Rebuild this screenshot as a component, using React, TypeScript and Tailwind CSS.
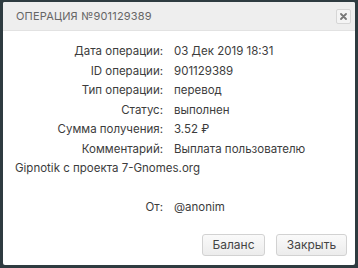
const rows: [string, string][] = [
  ["Дата операции:", "03 Дек 2019 18:31"],
  ["ID операции:", "901129389"],
  ["Тип операции:", "перевод"],
  ["Статус:", "выполнен"],
  ["Сумма получения:", "3.52 ₽"],
];

const Label = ({ children }: { children: React.ReactNode }) => (
  <span className="inline-block w-[148px] text-right mr-[11px]">{children}</span>
);

export default function App() {
  return (
    <div
      className="w-[358px] h-[268px] bg-[#2e3b40] pt-[2px] px-[3px]"
      style={{ fontFamily: "Inter, 'Noto Sans', sans-serif" }}
    >
      <div className="bg-white h-[263px] rounded-[2px] flex flex-col">
        {/* Header */}
        <div className="h-[29px] bg-[#eeeeee] border-b border-[#e2e2e2] rounded-t-[2px] flex items-center justify-between pl-[13px] pr-[4px]">
          <span className="text-[11px] tracking-[0.2px] text-[#666666]">ОПЕРАЦИЯ №901129389</span>
          <button className="w-[15px] h-[15px] border border-[#d6d6d6] rounded-[2px] bg-[#f4f4f4] flex items-center justify-center">
            <svg width="7" height="7" viewBox="0 0 7 7">
              <path d="M1 1L6 6M6 1L1 6" stroke="#777" strokeWidth="1.8" strokeLinecap="round" />
            </svg>
          </button>
        </div>

        {/* Body */}
        <div className="px-[12px] pt-[11px] text-[11.5px] leading-[19.5px] text-[#3c3c3c]">
          {rows.map(([l, v]) => (
            <div key={l}>
              <Label>{l}</Label>
              <span>{v}</span>
            </div>
          ))}
          <div>
            <Label>Комментарий:</Label>
            Выплата пользователю Gipnotik с проекта 7-Gnomes.org
          </div>
          <div className="h-[19.5px]" />
          <div>
            <Label>От:</Label>
            <span>@anonim</span>
          </div>
        </div>

        {/* Footer */}
        <div className="flex justify-end gap-[11px] pr-[8px] mt-[16px]">
          <button className="w-[63px] h-[22px] border border-[#d2d2d2] rounded-[3px] bg-gradient-to-b from-[#fafafa] to-[#ececec] text-[12px] text-[#444]">
            Баланс
          </button>
          <button className="w-[71px] h-[22px] border border-[#d2d2d2] rounded-[3px] bg-gradient-to-b from-[#fafafa] to-[#ececec] text-[12px] text-[#444]">
            Закрыть
          </button>
        </div>
      </div>
    </div>
  );
}
